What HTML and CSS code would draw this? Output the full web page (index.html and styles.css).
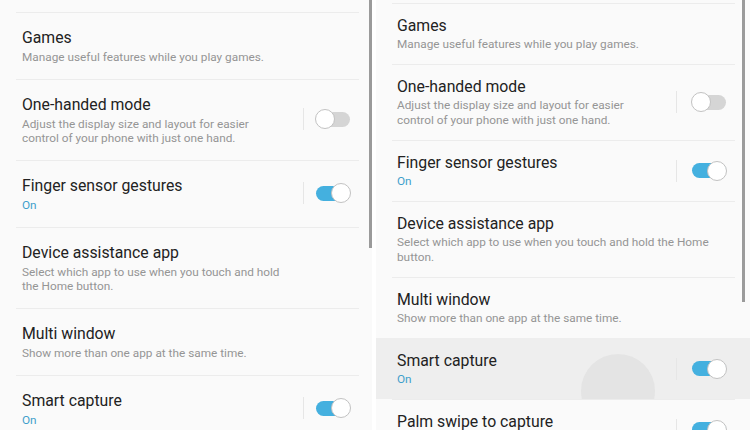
FILE: index.html
```html
<!DOCTYPE html>
<html lang="en">
<head>
<meta charset="utf-8">
<title>Advanced features</title>
<link rel="stylesheet" href="styles.css">
</head>
<body>
<div class="screen">
  <section class="panel panel-left">
    <div class="list">
      <div class="row">
        <div class="row-inner">
          <div class="text">
            <div class="title">Games</div>
            <div class="sub">Manage useful features while you play games.</div>
          </div>
        </div>
      </div>
      <div class="row">
        <div class="row-inner">
          <div class="text">
            <div class="title">One-handed mode</div>
            <div class="sub">Adjust the display size and layout for easier control of your phone with just one hand.</div>
          </div>
          <div class="switch-group"><span class="sep"></span><span class="toggle"><span class="knob"></span></span></div>
        </div>
      </div>
      <div class="row">
        <div class="row-inner">
          <div class="text">
            <div class="title">Finger sensor gestures</div>
            <div class="sub on">On</div>
          </div>
          <div class="switch-group"><span class="sep"></span><span class="toggle is-on"><span class="knob"></span></span></div>
        </div>
      </div>
      <div class="row">
        <div class="row-inner">
          <div class="text">
            <div class="title">Device assistance app</div>
            <div class="sub">Select which app to use when you touch and hold the Home button.</div>
          </div>
        </div>
      </div>
      <div class="row">
        <div class="row-inner">
          <div class="text">
            <div class="title">Multi window</div>
            <div class="sub">Show more than one app at the same time.</div>
          </div>
        </div>
      </div>
      <div class="row">
        <div class="row-inner">
          <div class="text">
            <div class="title">Smart capture</div>
            <div class="sub on">On</div>
          </div>
          <div class="switch-group"><span class="sep"></span><span class="toggle is-on"><span class="knob"></span></span></div>
        </div>
      </div>
    </div>
    <div class="scrollbar"></div>
  </section>

  <section class="panel panel-right">
    <div class="list">
      <div class="row">
        <div class="row-inner">
          <div class="text">
            <div class="title">Games</div>
            <div class="sub">Manage useful features while you play games.</div>
          </div>
        </div>
      </div>
      <div class="row">
        <div class="row-inner">
          <div class="text">
            <div class="title">One-handed mode</div>
            <div class="sub">Adjust the display size and layout for easier control of your phone with just one hand.</div>
          </div>
          <div class="switch-group"><span class="sep"></span><span class="toggle"><span class="knob"></span></span></div>
        </div>
      </div>
      <div class="row">
        <div class="row-inner">
          <div class="text">
            <div class="title">Finger sensor gestures</div>
            <div class="sub on">On</div>
          </div>
          <div class="switch-group"><span class="sep"></span><span class="toggle is-on"><span class="knob"></span></span></div>
        </div>
      </div>
      <div class="row">
        <div class="row-inner">
          <div class="text">
            <div class="title">Device assistance app</div>
            <div class="sub">Select which app to use when you touch and hold the Home button.</div>
          </div>
        </div>
      </div>
      <div class="row">
        <div class="row-inner">
          <div class="text">
            <div class="title">Multi window</div>
            <div class="sub">Show more than one app at the same time.</div>
          </div>
        </div>
      </div>
      <div class="row row-pressed">
        <span class="ripple"></span>
        <div class="row-inner">
          <div class="text">
            <div class="title">Smart capture</div>
            <div class="sub on">On</div>
          </div>
          <div class="switch-group"><span class="sep"></span><span class="toggle is-on"><span class="knob"></span></span></div>
        </div>
      </div>
      <div class="row">
        <div class="row-inner">
          <div class="text">
            <div class="title">Palm swipe to capture</div>
            <div class="sub on">On</div>
          </div>
          <div class="switch-group"><span class="sep"></span><span class="toggle is-on"><span class="knob"></span></span></div>
        </div>
      </div>
    </div>
    <div class="scrollbar"></div>
  </section>
</div>
</body>
</html>
```

FILE: styles.css
```css
html, body {
  margin: 0;
  padding: 0;
  background: #ffffff;
}

body {
  font-family: Roboto, "Noto Sans", "Liberation Sans", sans-serif;
  -webkit-font-smoothing: antialiased;
}

.screen {
  display: flex;
  gap: 4px;
  width: 750px;
  height: 430px;
  overflow: hidden;
}

.panel {
  position: relative;
  height: 430px;
  overflow: hidden;
  background: #fafafa;
}

.panel-left {
  width: 372px;
}

.panel-right {
  width: 374px;
}

.panel-left .list {
  padding-top: 12px;
}

.panel-right .list {
  padding-top: 3px;
}

.row {
  position: relative;
  overflow: hidden;
}

.row-inner {
  position: relative;
  display: flex;
  align-items: center;
  border-top: 1px solid #ececec;
  margin: 0 13px 0 16px;
  padding: 13px 0 15px 6px;
}

.panel-right .row-inner {
  margin: 0 15px 0 16px;
  padding: 11px 0 12px 5px;
}

.text {
  flex: 1;
  min-width: 0;
}

.panel-left .text {
  max-width: 266px;
  padding-right: 14px;
}

.panel-right .text {
  max-width: 330px;
  padding-right: 20px;
}

.title {
  font-size: 15.8px;
  line-height: 24px;
  color: #222222;
  white-space: nowrap;
}

.panel-right .title {
  line-height: 22px;
}

.sub {
  font-size: 11.8px;
  line-height: 14px;
  color: #959595;
}

.panel-right .sub {
  line-height: 15px;
}

.sub.on {
  color: #3e9fcb;
}

.switch-group {
  display: flex;
  align-items: center;
  margin-left: auto;
  padding-right: 9px;
}

.sep {
  width: 1px;
  height: 22px;
  background: #e6e6e6;
  margin-right: 12px;
}

.panel-right .sep {
  margin-right: 15px;
}

.toggle {
  display: flex;
  align-items: center;
  width: 34px;
  height: 15px;
  border-radius: 8px;
  background: #d5d5d5;
}

.toggle.is-on {
  background: #44b0df;
  justify-content: flex-end;
}

.knob {
  flex: none;
  width: 20px;
  height: 20px;
  box-sizing: border-box;
  border-radius: 50%;
  background: #ffffff;
  border: 1px solid #c2c2c2;
  margin-left: -1px;
}

.toggle.is-on .knob {
  margin-left: 0;
  margin-right: -1px;
}

.row-pressed {
  background: #eeeeee;
}

.row-pressed .row-inner {
  border-top-color: #eeeeee;
}

.ripple {
  position: absolute;
  left: 205px;
  top: 16px;
  width: 74px;
  height: 74px;
  border-radius: 50%;
  background: #e4e4e4;
}

.scrollbar {
  position: absolute;
  top: 0;
  right: 0;
  width: 3px;
  height: 248px;
  background: #9a9a9a;
}

.panel-right .scrollbar {
  right: 5px;
  height: 302px;
}
```
